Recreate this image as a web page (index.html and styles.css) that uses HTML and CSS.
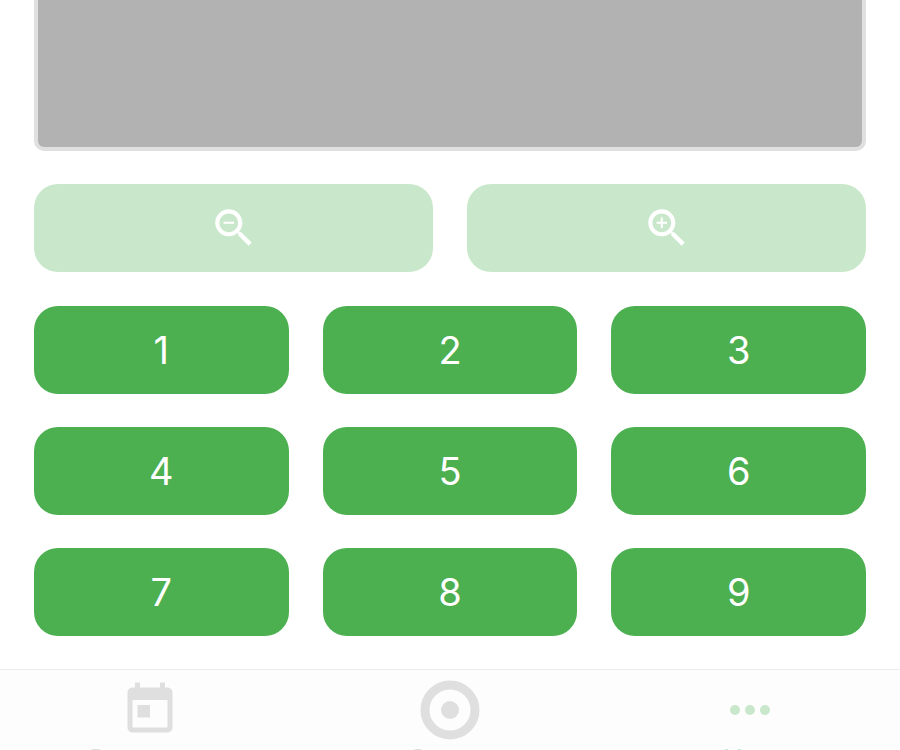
FILE: index.html
```html
<!DOCTYPE html>
<html lang="en">
<head>
<meta charset="utf-8">
<meta name="viewport" content="width=device-width, initial-scale=1">
<title>Camera</title>
<link rel="stylesheet" href="styles.css">
</head>
<body>
<main class="content">
  <div class="preview"></div>
  <div class="zoom-row">
    <button class="button" type="button" disabled aria-label="Zoom out">
      <svg class="zoom-icon" viewBox="0 0 24 24"><path d="M15.5 14h-.79l-.28-.27C15.41 12.59 16 11.11 16 9.5 16 5.91 13.09 3 9.5 3S3 5.91 3 9.5 5.91 16 9.5 16c1.61 0 3.09-.59 4.23-1.57l.27.28v.79l5 4.99L20.49 19l-4.99-5zm-6 0C7.01 14 5 11.99 5 9.5S7.01 5 9.5 5 14 7.01 14 9.5 11.99 14 9.5 14zM7 9h5v1H7z"/></svg>
    </button>
    <button class="button" type="button" disabled aria-label="Zoom in">
      <svg class="zoom-icon" viewBox="0 0 24 24"><path d="M15.5 14h-.79l-.28-.27C15.41 12.59 16 11.11 16 9.5 16 5.91 13.09 3 9.5 3S3 5.91 3 9.5 5.91 16 9.5 16c1.61 0 3.09-.59 4.23-1.57l.27.28v.79l5 4.99L20.49 19l-4.99-5zm-6 0C7.01 14 5 11.99 5 9.5S7.01 5 9.5 5 14 7.01 14 9.5 11.99 14 9.5 14zM12 10h-2v2H9v-2H7V9h2V7h1v2h2v1z"/></svg>
    </button>
  </div>
  <div class="keypad">
    <button class="button" type="button">1</button>
    <button class="button" type="button">2</button>
    <button class="button" type="button">3</button>
    <button class="button" type="button">4</button>
    <button class="button" type="button">5</button>
    <button class="button" type="button">6</button>
    <button class="button" type="button">7</button>
    <button class="button" type="button">8</button>
    <button class="button" type="button">9</button>
  </div>
</main>
<nav class="tabs">
  <a class="tab" href="#programme">
    <svg class="tab-icon" viewBox="0 0 24 24"><path d="M19 3h-1V1h-2v2H8V1H6v2H5c-1.11 0-1.99.9-1.99 2L3 19c0 1.1.89 2 2 2h14c1.1 0 2-.9 2-2V5c0-1.1-.9-2-2-2zm0 16H5V8h14v11zM7 10h5v5H7z"/></svg>
    <span>Programme</span>
  </a>
  <a class="tab" href="#camera">
    <svg class="tab-icon" viewBox="0 0 60 60"><circle cx="30" cy="30" r="25" fill="none" stroke="currentColor" stroke-width="9"/><circle cx="30" cy="30" r="9"/></svg>
    <span>Camera</span>
  </a>
  <a class="tab tab-active" href="#more">
    <svg class="tab-icon" viewBox="0 0 60 60"><circle cx="15" cy="30" r="5"/><circle cx="30" cy="30" r="5"/><circle cx="45" cy="30" r="5"/></svg>
    <span>More</span>
  </a>
</nav>
</body>
</html>
```
FILE: styles.css
```css
* {
  box-sizing: border-box;
}

body {
  margin: 0;
  height: 100vh;
  overflow: hidden;
  background: #fff;
  font-family: Inter, "Liberation Sans", sans-serif;
}

.content {
  padding: 0 34px 33px;
}

.preview {
  height: 151px;
  border: 4px solid #e0e0e0;
  border-top: 0;
  border-radius: 0 0 10px 10px;
  background: #b2b2b2;
}

.zoom-row {
  display: grid;
  grid-template-columns: repeat(2, 1fr);
  gap: 34px;
  margin: 33px 0 34px;
}

.keypad {
  display: grid;
  grid-template-columns: repeat(3, 1fr);
  gap: 33px 34px;
}

.button {
  display: flex;
  align-items: center;
  justify-content: center;
  height: 88px;
  padding: 0;
  border: 0;
  border-radius: 24px;
  background: #4caf50;
  color: #fff;
  font: 400 38px/48px Inter, "Liberation Sans", sans-serif;
}

.button:disabled {
  background: #c9e8cb;
}

.zoom-icon {
  width: 50px;
  height: 50px;
  fill: currentColor;
}

.tabs {
  display: grid;
  grid-template-columns: repeat(3, 1fr);
  padding: 10px 0;
  border-top: 1px solid #ececec;
  background: #fdfdfd;
}

.tab {
  display: flex;
  flex-direction: column;
  align-items: center;
  gap: 4px;
  color: #dfdfdf;
  font-size: 22px;
  line-height: 26px;
  text-decoration: none;
}

.tab-active {
  color: #c9e8cb;
}

.tab-icon {
  width: 60px;
  height: 60px;
  fill: currentColor;
}
```
